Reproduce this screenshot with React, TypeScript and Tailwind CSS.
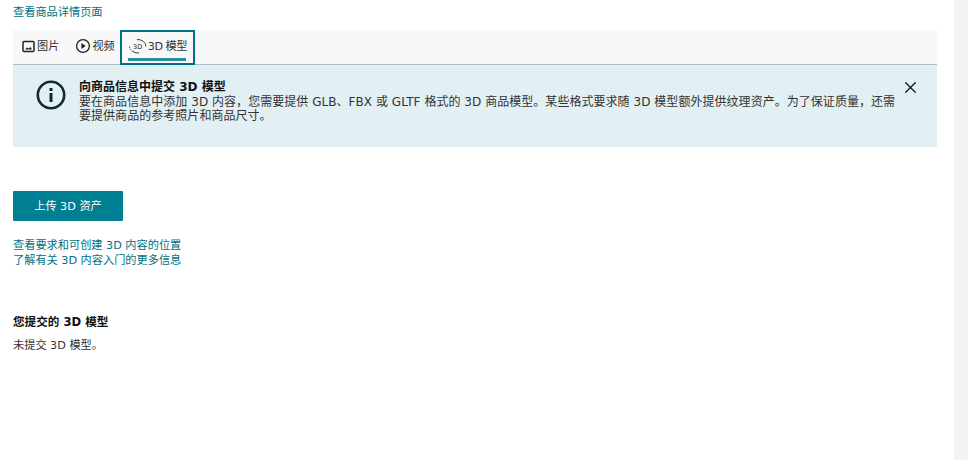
import { X } from "lucide-react";

const font = { fontFamily: '"DejaVu Sans", "Noto Sans CJK SC", sans-serif' };

const App = () => {
  return (
    <div
      className="flex h-[460px] w-[968px] overflow-hidden bg-white text-[11.2px] leading-[15px] text-[#0f1111]"
      style={font}
    >
      <div className="w-[954px] pl-[13px] pr-[17px] pt-[5px]">
        <a className="block text-[#007185]">查看商品详情页面</a>

        <div className="mt-[10px] flex h-[35px] items-stretch border-b border-[#a9c0c4] bg-[#f8f8f8] pl-[9px]">
          <div className="flex items-center gap-[2px] pb-[2px] text-[#333]">
            <svg width="13" height="13" viewBox="0 0 13 13" fill="none">
              <rect x="1" y="1.500" width="11" height="10" rx="1" stroke="#222" strokeWidth="1.500" />
              <path d="M3 9.500l2-2 1.500 1 2-1.500 1.500 2.500z" fill="#222" />
            </svg>
            <span>图片</span>
          </div>
          <div className="ml-[16px] flex items-center gap-[1px] pb-[2px] text-[#333]">
            <svg width="16" height="16" viewBox="0 0 17 17" fill="none">
              <circle cx="8.500" cy="8.500" r="6.800" stroke="#222" strokeWidth="1.400" />
              <path d="M6.800 5.300l4.500 3.200-4.500 3.200z" fill="#222" />
            </svg>
            <span>视频</span>
          </div>
          <div className="relative ml-[5px] -mb-px flex w-[75px] items-center border-2 border-[#007185] pl-[6px] pb-[2px] text-[#333]">
            <svg width="20" height="17" viewBox="0 0 20 17" fill="none" className="shrink-0">
              <path d="M1.500 8.500a8.500 7 0 0 0 2.500 4.500" stroke="#222" strokeWidth="0.900" strokeDasharray="1.500 1" />
              <path d="M4 13a8.500 7 0 0 0 7 2" stroke="#222" strokeWidth="0.900" />
              <path d="M9 1.500a8.500 7 0 0 1 9 7" stroke="#222" strokeWidth="0.900" />
              <text x="5" y="10.500" fontSize="6.500" fill="#222">
                3D
              </text>
            </svg>
            <span className="whitespace-nowrap tracking-[-0.500px]">3D 模型</span>
            <span className="absolute bottom-[2px] left-[6px] h-[3px] w-[58px] bg-[#2a8d9c]" />
          </div>
        </div>

        <div className="relative flex h-[82px] bg-[#e3f0f3] pl-[23px] pt-[15px]">
          <svg width="30" height="30" viewBox="0 0 30 30" fill="none" className="shrink-0">
            <circle cx="15" cy="15" r="13.200" stroke="#0f2a30" strokeWidth="2.600" />
            <rect x="13.500" y="13" width="3" height="9" fill="#0f2a30" />
            <rect x="13.500" y="8" width="3" height="3" fill="#0f2a30" />
          </svg>
          <div className="ml-[13px] w-[822px] text-[12px] leading-[14.500px]">
            <div className="font-bold">向商品信息中提交 3D 模型</div>
            <p className="tracking-[0.040px] text-[#333]">
              要在商品信息中添加 3D 内容，您需要提供 GLB、FBX 或 GLTF 格式的 3D 商品模型。某些格式要求随 3D 模型额外提供纹理资产。为了保证质量，还需要提供商品的参考照片和商品尺寸。
            </p>
          </div>
          <X size={19} strokeWidth={1.500} className="absolute right-[17px] top-[13px] text-[#0f1111]" />
        </div>

        <button className="mt-[44px] block h-[30px] w-[110px] rounded-[1px] bg-[#007f92] text-center text-[11.2px] text-white">
          上传 3D 资产
        </button>

        <div className="mt-[17px] text-[#007185]">
          <a className="block">查看要求和可创建 3D 内容的位置</a>
          <a className="block">了解有关 3D 内容入门的更多信息</a>
        </div>

        <h3 className="mt-[47px] text-[11.600px] font-bold">您提交的 3D 模型</h3>
        <p className="mt-[8px] text-[#333]">未提交 3D 模型。</p>
      </div>
      <div className="w-[14px] bg-[#f3f3f3]" />
    </div>
  );
};

export default App;
